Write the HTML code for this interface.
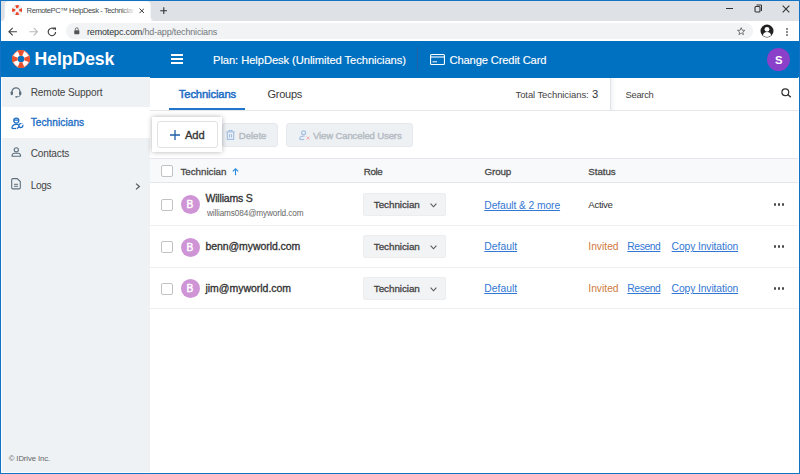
<!DOCTYPE html>
<html><head><meta charset="utf-8"><title>RemotePC HelpDesk - Technicians</title>
<style>
*{box-sizing:border-box;margin:0;padding:0}
html,body{width:800px;height:474px;overflow:hidden;background:#fff;font-family:"Liberation Sans","DejaVu Sans",sans-serif}
body{position:relative}
.b{position:absolute}
.tx{position:absolute;white-space:nowrap;line-height:1}
.cb{position:absolute;left:161px;width:12px;height:12px;border:1px solid #c2c2c2;border-radius:2px;background:#fff}
.avt{position:absolute;left:180.5px;width:19px;height:19px;border-radius:50%;background:#cf94d6;color:#fff;font-size:10.2px;font-weight:normal;-webkit-text-stroke:0.45px #fff;text-align:center;line-height:19px}
.sel{position:absolute;left:363px;width:82.5px;height:22.5px;background:#f2f3f4;border:1px solid #ecedef;border-radius:2px}
.ln{position:absolute;left:150px;width:649px;height:1px;background:#eff0f2}
.dots{position:absolute;left:773.5px;width:2.6px;height:2.6px;border-radius:50%;background:#4a4a4a;box-shadow:4px 0 #4a4a4a,8px 0 #4a4a4a}
.btn{position:absolute;top:123px;height:24px;border:1px solid #e5e9ed;background:#eef1f4;border-radius:3px}

</style></head><body>
<!-- browser chrome -->
<div class="b" style="left:0;top:0;width:800px;height:20.6px;background:#dee1e6"></div>
<svg class="b" style="left:0;top:0" width="160" height="21" viewBox="0 0 160 21"><path d="M0.8 20.6Q4.8 20.6 4.8 16.6V5.2Q4.8 1.2 8.8 1.2H146.6Q150.6 1.2 150.6 5.2V16.6Q150.6 20.6 154.6 20.6Z" fill="#fff"/><rect x="4.8" y="19" width="145.8" height="2" fill="#fff"/></svg>
<svg class="b" style="left:11.9px;top:5.1px" width="10.4" height="10.4" viewBox="-9.3 -9.3 18.6 18.6"><circle r="6.3" fill="none" stroke="#f4f4f4" stroke-width="5.4"/><circle r="8.8" fill="none" stroke="#c9cdd2" stroke-width="0.9"/><circle r="3.5" fill="none" stroke="#c9cdd2" stroke-width="0.9"/><g fill="#ee4427"><path d="M-3.4 -8.6A9.25 9.25 0 0 1 3.4 -8.6L1.5 -3.4A3.6 3.6 0 0 0 -1.5 -3.4Z" transform="rotate(0)"/><path d="M-3.4 -8.6A9.25 9.25 0 0 1 3.4 -8.6L1.5 -3.4A3.6 3.6 0 0 0 -1.5 -3.4Z" transform="rotate(90)"/><path d="M-3.4 -8.6A9.25 9.25 0 0 1 3.4 -8.6L1.5 -3.4A3.6 3.6 0 0 0 -1.5 -3.4Z" transform="rotate(180)"/><path d="M-3.4 -8.6A9.25 9.25 0 0 1 3.4 -8.6L1.5 -3.4A3.6 3.6 0 0 0 -1.5 -3.4Z" transform="rotate(270)"/></g></svg>
<svg class="b" style="left:138.5px;top:8px" width="5.6" height="5.6" viewBox="0 0 7 7"><path d="M0.6 0.6L6.4 6.4M6.4 0.6L0.6 6.4" stroke="#333" stroke-width="1.2"/></svg>
<svg class="b" style="left:159.8px;top:6.6px" width="7.6" height="7.6" viewBox="0 0 9 9"><path d="M4.5 0.3V8.7M0.3 4.5H8.7" stroke="#333" stroke-width="1.3"/></svg>
<svg class="b" style="left:726px;top:7.3px" width="8" height="3" viewBox="0 0 8 3"><path d="M0 1.5H7" stroke="#333" stroke-width="1"/></svg>
<svg class="b" style="left:754px;top:4px" width="9" height="9" viewBox="0 0 9 9"><rect x="1" y="2.5" width="5" height="5.5" rx="1" fill="none" stroke="#333" stroke-width="1.1"/><path d="M2.5 1H7.5V7" fill="none" stroke="#333" stroke-width="1"/></svg>
<svg class="b" style="left:782px;top:5px" width="8" height="8" viewBox="0 0 8 8"><path d="M0.7 0.7L7.3 7.3M7.3 0.7L0.7 7.3" stroke="#333" stroke-width="1.1"/></svg>
<div class="b" style="left:0;top:20.6px;width:800px;height:20.4px;background:#fff"></div>
<svg class="b" style="left:8.3px;top:26.9px" width="9.4" height="9.4" viewBox="0 0 10 10"><path d="M9.5 5H1.2M5 1L1 5L5 9" fill="none" stroke="#444" stroke-width="1.2"/></svg>
<svg class="b" style="left:28.5px;top:26.9px" width="9.4" height="9.4" viewBox="0 0 10 10"><path d="M0.5 5H8.8M5 1L9 5L5 9" fill="none" stroke="#bbb" stroke-width="1.2"/></svg>
<svg class="b" style="left:47.3px;top:26.9px" width="10" height="10" viewBox="0 0 10 10"><path d="M8.6 5A3.7 3.7 0 1 1 7.4 2.2" fill="none" stroke="#444" stroke-width="1.2"/><path d="M6 0.4H9V3.6Z" fill="#444"/></svg>
<div class="b" style="left:66px;top:23px;width:686.5px;height:16.4px;border-radius:8.2px;background:#f1f3f4"></div>
<svg class="b" style="left:74.1px;top:27.2px" width="5.6" height="8" viewBox="0 0 7 9"><rect x="0.3" y="3.5" width="6.4" height="5" rx="0.8" fill="#555"/><path d="M1.7 3.5V2.3A1.8 1.8 0 0 1 5.3 2.3V3.5" fill="none" stroke="#555" stroke-width="1"/></svg>
<svg class="b" style="left:736.6px;top:27.4px" width="8.4" height="8.4" viewBox="0 0 10 10"><path d="M5 0.8L6.2 3.8L9.4 4L6.9 6L7.7 9.1L5 7.4L2.3 9.1L3.1 6L0.6 4L3.8 3.8Z" fill="none" stroke="#555" stroke-width="0.9"/></svg>
<svg class="b" style="left:760px;top:24px" width="14" height="14" viewBox="0 0 14 14"><circle cx="7" cy="7" r="6.5" fill="#222"/><circle cx="7" cy="5.3" r="2.4" fill="#fff"/><path d="M2.8 11.2A4.4 4.4 0 0 1 11.2 11.2A6 6 0 0 1 2.8 11.2Z" fill="#fff"/></svg>
<div class="b" style="left:786px;top:28px;width:2px;height:2px;border-radius:1px;background:#666;box-shadow:0 3px #666,0 6px #666"></div>

<!-- app header -->
<div class="b" style="left:0;top:41px;width:800px;height:36.6px;background:#0070c0"></div>
<svg class="b" style="left:11.6px;top:49.9px" width="18" height="18" viewBox="-9.3 -9.3 18.6 18.6"><circle r="6.3" fill="none" stroke="#fff" stroke-width="5.8"/><g fill="#e8502e"><path d="M-3.4 -8.6A9.25 9.25 0 0 1 3.4 -8.6L1.3 -3.2A3.4 3.4 0 0 0 -1.3 -3.2Z"/><path d="M-3.4 -8.6A9.25 9.25 0 0 1 3.4 -8.6L1.3 -3.2A3.4 3.4 0 0 0 -1.3 -3.2Z" transform="rotate(90)"/><path d="M-3.4 -8.6A9.25 9.25 0 0 1 3.4 -8.6L1.3 -3.2A3.4 3.4 0 0 0 -1.3 -3.2Z" transform="rotate(180)"/><path d="M-3.4 -8.6A9.25 9.25 0 0 1 3.4 -8.6L1.3 -3.2A3.4 3.4 0 0 0 -1.3 -3.2Z" transform="rotate(270)"/></g><circle r="8.9" fill="none" stroke="#e8502e" stroke-width="0.7"/></svg>
<div class="b" style="left:171px;top:53.9px;width:12.3px;height:1.8px;background:#fff;box-shadow:0 4px #fff,0 8px #fff"></div>
<div class="b" style="left:417px;top:47px;width:1px;height:24px;background:#1c62a6"></div>
<svg class="b" style="left:430px;top:54px" width="15" height="11" viewBox="0 0 15 11"><rect x="0.55" y="0.55" width="13.9" height="9.9" rx="1" fill="none" stroke="#fff" stroke-width="1.1"/><path d="M0.6 3H14.4" stroke="#fff" stroke-width="1.1"/><path d="M2.5 7.8H7" stroke="#fff" stroke-width="1"/></svg>
<div class="b" style="left:767px;top:47.5px;width:23px;height:23px;border-radius:50%;background:#8a40c8"></div>

<!-- sidebar -->
<div class="b" style="left:0;top:77px;width:150px;height:397px;background:#eef2f5"></div>
<div class="b" style="left:0;top:107px;width:150px;height:31px;background:#fff"></div>
<svg class="b" style="left:10.4px;top:86.9px" width="12" height="11" viewBox="0 0 12 11"><path d="M2 6.2V4.8A4 4 0 0 1 10 4.8V6.2" fill="none" stroke="#5d6f7d" stroke-width="1.2"/><rect x="0.6" y="4.4" width="2.4" height="3.8" rx="1.1" fill="#5d6f7d"/><rect x="9" y="4.4" width="2.4" height="3.8" rx="1.1" fill="#5d6f7d"/><path d="M10.2 7.8C10.2 9.4 8.8 9.8 6.8 9.8" fill="none" stroke="#5d6f7d" stroke-width="0.9"/><circle cx="6.2" cy="9.8" r="0.9" fill="#5d6f7d"/></svg>
<svg class="b" style="left:11px;top:116.5px" width="13" height="13" viewBox="0 0 13 13"><g fill="none" stroke="#1f6fc6" stroke-width="1.25"><circle cx="5.3" cy="3.6" r="2.5"/><path d="M2.4 3.1H8.2"/><path d="M0.9 11.6C0.9 8.6 2.6 7.4 5.3 7.4C6.2 7.4 6.9 7.5 7.5 7.8"/><path d="M0.9 11.5H5.2"/><path d="M6 11.6L8.6 9.4"/></g><circle cx="9.8" cy="8.6" r="2" fill="none" stroke="#1f6fc6" stroke-width="1.3"/><circle cx="10.9" cy="7.4" r="1" fill="#fff"/></svg>
<svg class="b" style="left:11.2px;top:147.2px" width="11" height="10" viewBox="0 0 11 10"><g fill="none" stroke="#5d6f7d" stroke-width="1.1"><circle cx="5.3" cy="2.8" r="2.1"/><path d="M1 9.3C1 7.2 2.4 6.3 3.4 6.3H7.2C8.2 6.3 9.6 7.2 9.6 9.3Z" stroke-linejoin="round"/></g></svg>
<svg class="b" style="left:11px;top:178px" width="10" height="11.5" viewBox="0 0 10 11.5"><path d="M1.8 0.6H6.2L9.3 3.6V9.8A1.1 1.1 0 0 1 8.2 10.9H1.8A1.1 1.1 0 0 1 0.7 9.8V1.7A1.1 1.1 0 0 1 1.8 0.6Z" fill="none" stroke="#5d6f7d" stroke-width="1.1"/><path d="M3 6.3H7M3 8.3H7" stroke="#5d6f7d" stroke-width="1"/></svg>
<svg class="b" style="left:135px;top:182.8px" width="6" height="7" viewBox="0 0 6 7"><path d="M1 0.6L4.4 3.5L1 6.4" fill="none" stroke="#555" stroke-width="1.2"/></svg>

<!-- tabs row -->
<div class="b" style="left:150px;top:110px;width:649px;height:1px;background:#e4e7ea"></div>
<div class="b" style="left:169px;top:108px;width:76px;height:2px;background:#1f76cc"></div>
<div class="b" style="left:610px;top:77.6px;width:6px;height:32.4px;background:linear-gradient(90deg,#dfe2e6 0,#dfe2e6 1px,#f3f4f6 1px,#fff 6px)"></div>
<svg class="b" style="left:781px;top:88.3px" width="11" height="10" viewBox="0 0 11 10"><circle cx="4.3" cy="4.2" r="3.4" fill="none" stroke="#333" stroke-width="1.2"/><path d="M6.8 6.6L9.8 9.3" stroke="#333" stroke-width="1.3"/></svg>

<!-- toolbar -->
<div class="btn" style="left:222px;width:56px"></div>
<div class="btn" style="left:286px;width:127px"></div>
<svg class="b" style="left:225.5px;top:129.5px" width="9" height="10" viewBox="0 0 9 10"><g fill="none" stroke="#a3bfe2" stroke-width="1.15"><path d="M0.3 1.9H8.7"/><path d="M3 1.7V0.6H6V1.7"/><path d="M1.3 2V9.3H7.7V2"/><path d="M3.5 4V7.4M5.5 4V7.4"/></g></svg>
<svg class="b" style="left:298.5px;top:129.5px" width="12" height="11" viewBox="0 0 12 11"><g fill="none" stroke="#a3bfe2" stroke-width="1.15"><circle cx="4.6" cy="2.8" r="2"/><path d="M0.7 9.6C0.7 7.2 2.2 6.2 3.4 6.2H5.6"/><path d="M0.7 9.5H5.2"/></g><path d="M7.6 6.6L10.6 9.6M10.6 6.6L7.6 9.6" stroke="#f0a9a9" stroke-width="1"/></svg>
<div class="b" style="left:152px;top:117px;width:70px;height:35px;background:#fff;box-shadow:0 0 5px rgba(0,0,0,.3)"></div>
<div class="b" style="left:157px;top:121.2px;width:61px;height:27px;background:#fff;border:1px solid #e2e2e2;border-radius:3px"></div>
<svg class="b" style="left:170px;top:130px" width="10" height="10" viewBox="0 0 10 10"><path d="M5 0V10M0 5H10" stroke="#1d5fa8" stroke-width="1.3"/></svg>

<!-- table -->
<div class="b" style="left:150px;top:158px;width:649px;height:25px;background:#f8f9fa;border-top:1px solid #e4e6e9;border-bottom:1px solid #e4e6e9"></div>
<div class="cb" style="top:165px"></div>
<svg class="b" style="left:231.5px;top:168px" width="7" height="7.5" viewBox="0 0 7 7.5"><path d="M3.5 7.3V1M0.8 3.4L3.5 0.8L6.2 3.4" fill="none" stroke="#2b8be0" stroke-width="1.1"/></svg>
<div class="ln" style="top:225px"></div><div class="ln" style="top:266.5px"></div><div class="ln" style="top:308px"></div>
<div class="cb" style="top:198.7px"></div><div class="cb" style="top:240.8px"></div><div class="cb" style="top:282.6px"></div>
<div class="avt" style="top:195.3px">B</div><div class="avt" style="top:237.5px">B</div><div class="avt" style="top:279.3px">B</div>
<div class="sel" style="top:193px"></div><div class="sel" style="top:235px"></div><div class="sel" style="top:277px"></div>
<svg class="b" style="left:430.2px;top:202.6px" width="7" height="5" viewBox="0 0 7 5"><path d="M0.6 0.7L3.5 3.8L6.4 0.7" fill="none" stroke="#555" stroke-width="1.1"/></svg>
<svg class="b" style="left:430.2px;top:244.6px" width="7" height="5" viewBox="0 0 7 5"><path d="M0.6 0.7L3.5 3.8L6.4 0.7" fill="none" stroke="#555" stroke-width="1.1"/></svg>
<svg class="b" style="left:430.2px;top:286.6px" width="7" height="5" viewBox="0 0 7 5"><path d="M0.6 0.7L3.5 3.8L6.4 0.7" fill="none" stroke="#555" stroke-width="1.1"/></svg>
<div class="dots" style="top:203.2px"></div><div class="dots" style="top:245px"></div><div class="dots" style="top:287px"></div>

<!-- window frame -->
<div class="b" style="left:0;top:0;width:800px;height:474px;border:1.25px solid #1272c4;z-index:50;pointer-events:none"></div><div class="b" style="left:1.25px;top:77.3px;width:797.5px;height:395.4px;border:0.9px solid rgba(255,255,255,.75);border-top:0;z-index:49;pointer-events:none"></div>
<div class="b" style="left:121px;top:4px;width:14px;height:15px;background:linear-gradient(90deg,rgba(255,255,255,0),#fff);z-index:5"></div>

<span class="tx" id="tabt" style="left:26.6px;top:7.13px;font-size:7.60px;letter-spacing:-0.432px;color:#45494d;width:108px;overflow:hidden"><span id="tabt_in">RemotePC™ HelpDesk</span> - Technicians</span>
<span class="tx" id="url" style="left:87px;top:27.62px;font-size:9.00px;letter-spacing:-0.160px;color:#303336">remotepc.com<span style="color:#73777b">/hd-app/technicians</span></span>
<span class="tx" id="logo" style="left:34.5px;top:50.95px;font-size:17.62px;letter-spacing:-0.050px;color:#fff;font-weight:bold">HelpDesk</span>
<span class="tx" id="plan" style="left:213px;top:54.86px;font-size:11.20px;letter-spacing:-0.073px;color:#fff;-webkit-text-stroke:0.15px #fff">Plan: HelpDesk (Unlimited Technicians)</span>
<span class="tx" id="ccc" style="left:449.5px;top:54.86px;font-size:11.20px;letter-spacing:-0.151px;color:#fff;-webkit-text-stroke:0.15px #fff">Change Credit Card</span>
<span class="tx" id="av" style="left:775px;top:54.77px;font-size:11.30px;letter-spacing:0.062px;color:#fff;font-weight:bold">S</span>
<span class="tx" id="n1" style="left:30.7px;top:88.33px;font-size:10.10px;letter-spacing:-0.118px;color:#444">Remote Support</span>
<span class="tx" id="n2" style="left:30.7px;top:118.43px;font-size:10.10px;letter-spacing:0.074px;color:#1f6fc6;-webkit-text-stroke:0.35px #1f6fc6">Technicians</span>
<span class="tx" id="n3" style="left:30.7px;top:149.33px;font-size:10.10px;letter-spacing:-0.170px;color:#444">Contacts</span>
<span class="tx" id="n4" style="left:30.7px;top:180.83px;font-size:10.10px;letter-spacing:-0.303px;color:#444">Logs</span>
<span class="tx" id="cp" style="left:8.7px;top:455.41px;font-size:7.74px;letter-spacing:-0.100px;color:#666">© IDrive Inc.</span>
<span class="tx" id="t1" style="left:178.8px;top:89.16px;font-size:11.20px;letter-spacing:-0.111px;color:#1f6fc6;-webkit-text-stroke:0.5px #1f6fc6">Technicians</span>
<span class="tx" id="t2" style="left:267.5px;top:89.33px;font-size:11.00px;letter-spacing:-0.247px;color:#3a3a3a">Groups</span>
<span class="tx" id="tot" style="left:515.5px;top:89.91px;font-size:9.50px;letter-spacing:-0.095px;color:#444">Total Technicians:</span>
<span class="tx" id="tot3" style="left:592px;top:89.16px;font-size:11.20px;letter-spacing:-0.142px;color:#333">3</span>
<span class="tx" id="srch" style="left:625.5px;top:89.70px;font-size:9.40px;letter-spacing:-0.281px;color:#444">Search</span>
<span class="tx" id="add" style="left:185px;top:129.97px;font-size:11.18px;letter-spacing:-0.100px;color:#333;-webkit-text-stroke:0.3px #333">Add</span>
<span class="tx" id="del" style="left:238.8px;top:130.83px;font-size:9.60px;letter-spacing:-0.025px;color:#b4bbc3;-webkit-text-stroke:0.4px #b4bbc3">Delete</span>
<span class="tx" id="vcu" style="left:313px;top:130.83px;font-size:9.60px;letter-spacing:-0.158px;color:#b4bbc3;-webkit-text-stroke:0.4px #b4bbc3">View Canceled Users</span>
<span class="tx" id="h1" style="left:180.5px;top:166.57px;font-size:9.80px;letter-spacing:-0.042px;color:#484848;-webkit-text-stroke:0.28px #484848">Technician</span>
<span class="tx" id="h2" style="left:363.8px;top:166.57px;font-size:9.80px;letter-spacing:-0.392px;color:#484848;-webkit-text-stroke:0.28px #484848">Role</span>
<span class="tx" id="h3" style="left:484.5px;top:166.57px;font-size:9.80px;letter-spacing:-0.128px;color:#484848;-webkit-text-stroke:0.28px #484848">Group</span>
<span class="tx" id="h4" style="left:588.3px;top:166.57px;font-size:9.80px;letter-spacing:-0.082px;color:#484848;-webkit-text-stroke:0.28px #484848">Status</span>
<span class="tx" id="r1n" style="left:205.5px;top:192.91px;font-size:10.50px;letter-spacing:-0.191px;color:#333;-webkit-text-stroke:0.32px #333">Williams S</span>
<span class="tx" id="r1e" style="left:207px;top:210.14px;font-size:8.19px;letter-spacing:-0.100px;color:#666">williams084@myworld.com</span>
<span class="tx" id="r2n" style="left:205.5px;top:240.91px;font-size:10.50px;letter-spacing:-0.080px;color:#333;-webkit-text-stroke:0.32px #333">benn@myworld.com</span>
<span class="tx" id="r3n" style="left:205.5px;top:282.92px;font-size:10.50px;letter-spacing:-0.022px;color:#333;-webkit-text-stroke:0.32px #333">jim@myworld.com</span>
<span class="tx" id="s0" style="left:373.8px;top:200.08px;font-size:9.90px;letter-spacing:-0.069px;color:#444;-webkit-text-stroke:0.3px #444">Technician</span>
<span class="tx" id="s1" style="left:373.8px;top:242.08px;font-size:9.90px;letter-spacing:-0.069px;color:#444;-webkit-text-stroke:0.3px #444">Technician</span>
<span class="tx" id="s2" style="left:373.8px;top:284.08px;font-size:9.90px;letter-spacing:-0.069px;color:#444;-webkit-text-stroke:0.3px #444">Technician</span>
<span class="tx" id="g0" style="left:484.3px;top:200.67px;font-size:10.30px;letter-spacing:-0.093px;color:#3377d4;text-decoration:underline;text-underline-offset:1px">Default &amp; 2 more</span>
<span class="tx" id="st0" style="left:588.3px;top:199.75px;font-size:9.70px;letter-spacing:-0.353px;color:#333">Active</span>
<span class="tx" id="g1" style="left:484.3px;top:242.07px;font-size:10.30px;letter-spacing:0.022px;color:#3377d4;text-decoration:underline;text-underline-offset:1px">Default</span>
<span class="tx" id="st1" style="left:588.3px;top:242.07px;font-size:10.30px;letter-spacing:-0.007px;color:#cf7a40">Invited</span>
<span class="tx" id="rs1" style="left:627.3px;top:242.07px;font-size:10.30px;letter-spacing:-0.402px;color:#3377d4;text-decoration:underline;text-underline-offset:1px">Resend</span>
<span class="tx" id="ci1" style="left:671.6px;top:242.07px;font-size:10.30px;letter-spacing:-0.103px;color:#3377d4;text-decoration:underline;text-underline-offset:1px">Copy Invitation</span>
<span class="tx" id="g2" style="left:484.3px;top:283.97px;font-size:10.30px;letter-spacing:0.022px;color:#3377d4;text-decoration:underline;text-underline-offset:1px">Default</span>
<span class="tx" id="st2" style="left:588.3px;top:283.97px;font-size:10.30px;letter-spacing:-0.007px;color:#cf7a40">Invited</span>
<span class="tx" id="rs2" style="left:627.3px;top:283.97px;font-size:10.30px;letter-spacing:-0.402px;color:#3377d4;text-decoration:underline;text-underline-offset:1px">Resend</span>
<span class="tx" id="ci2" style="left:671.6px;top:283.97px;font-size:10.30px;letter-spacing:-0.103px;color:#3377d4;text-decoration:underline;text-underline-offset:1px">Copy Invitation</span>
</body></html>
